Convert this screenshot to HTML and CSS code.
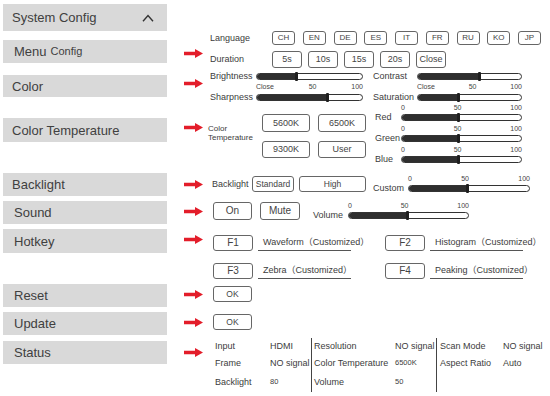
FILE: index.html
```html
<!DOCTYPE html>
<html lang="en">
<head>
  <meta charset="UTF-8" />
  <meta name="viewport" content="width=device-width, initial-scale=1.0" />
  <title>menu map</title>
  <link rel="stylesheet" href="styles.css">
</head>
<body>
  <div class="page">
    <!-- left: menu entries -->
    <div class="menu">
      <div class="menu-item item-system">
        <span>System Config</span>
        <svg class="chevron" viewBox="0 0 12 8"><polyline points="1,7.2 6,1.5 11,7.2" /></svg>
      </div>
      <div class="menu-item item-menu wide">Menu <small>Config</small></div>
      <div class="menu-item item-color">Color</div>
      <div class="menu-item item-temp">Color Temperature</div>
      <div class="menu-item item-backlight">Backlight</div>
      <div class="menu-item item-sound wide">Sound</div>
      <div class="menu-item item-hotkey wide">Hotkey</div>
      <div class="menu-item item-reset wide">Reset</div>
      <div class="menu-item item-update wide">Update</div>
      <div class="menu-item item-status wide">Status</div>
    </div>

    <!-- right: what each entry opens -->
    <div class="panel">
      <div class="row row-lang">
        <span class="arrow-slot"></span>
        <span class="label">Language</span>
        <div class="lang">
          <span class="btn">CH</span>
          <span class="btn">EN</span>
          <span class="btn">DE</span>
          <span class="btn">ES</span>
          <span class="btn">IT</span>
          <span class="btn">FR</span>
          <span class="btn">RU</span>
          <span class="btn">KO</span>
          <span class="btn">JP</span>
        </div>
      </div>

      <div class="row row-duration">
        <svg class="arrow" viewBox="0 0 19 9"><path d="M0 2.7H11V0L19 4.5L11 9V6.3H0Z" /></svg>
        <span class="label">Duration</span>
        <div class="durations">
          <span class="btn">5s</span>
          <span class="btn">10s</span>
          <span class="btn">15s</span>
          <span class="btn">20s</span>
          <span class="btn">Close</span>
        </div>
      </div>

      <div class="row row-color">
        <svg class="arrow" viewBox="0 0 19 9"><path d="M0 2.7H11V0L19 4.5L11 9V6.3H0Z" /></svg>
        <div class="adjust-grid">
          <span class="name">Brightness</span>
          <div class="slider"><div class="fill" style="width:37%"></div></div>
          <span class="name second">Contrast</span>
          <div class="slider"><div class="fill" style="width:59%"></div></div>

          <span></span>
          <div class="scale"><span>Close</span><span>50</span><span>100</span></div>
          <span></span>
          <div class="scale"><span>Close</span><span>50</span><span>100</span></div>

          <span class="name">Sharpness</span>
          <div class="slider"><div class="fill" style="width:67%"></div></div>
          <span class="name second">Saturation</span>
          <div class="slider"><div class="fill" style="width:39%"></div></div>
        </div>
      </div>

      <div class="row row-temp">
        <svg class="arrow" viewBox="0 0 19 9"><path d="M0 2.7H11V0L19 4.5L11 9V6.3H0Z" /></svg>
        <span class="temp-label">Color<br>Temperature</span>
        <div class="temp-buttons">
          <span class="btn">5600K</span>
          <span class="btn">6500K</span>
          <span class="btn">9300K</span>
          <span class="btn">User</span>
        </div>
        <div class="rgb">
          <div class="channel">
            <span></span>
            <div class="scale"><span>0</span><span>50</span><span>100</span></div>
            <span class="name">Red</span>
            <div class="slider"><div class="fill" style="width:47%"></div></div>
          </div>
          <div class="channel">
            <span></span>
            <div class="scale"><span>0</span><span>50</span><span>100</span></div>
            <span class="name">Green</span>
            <div class="slider"><div class="fill" style="width:47%"></div></div>
          </div>
          <div class="channel">
            <span></span>
            <div class="scale"><span>0</span><span>50</span><span>100</span></div>
            <span class="name">Blue</span>
            <div class="slider"><div class="fill" style="width:47%"></div></div>
          </div>
        </div>
      </div>

      <div class="row row-backlight">
        <svg class="arrow" viewBox="0 0 19 9"><path d="M0 2.7H11V0L19 4.5L11 9V6.3H0Z" /></svg>
        <span class="bl-label">Backlight</span>
        <span class="btn bl-standard">Standard</span>
        <span class="btn bl-high">High</span>
        <div class="channel custom">
          <span></span>
          <div class="scale"><span>0</span><span>50</span><span>100</span></div>
          <span class="name">Custom</span>
          <div class="slider"><div class="fill" style="width:48%"></div></div>
        </div>
      </div>

      <div class="row row-sound">
        <svg class="arrow" viewBox="0 0 19 9"><path d="M0 2.7H11V0L19 4.5L11 9V6.3H0Z" /></svg>
        <span class="btn snd-on">On</span>
        <span class="btn snd-mute">Mute</span>
        <div class="channel volume">
          <span></span>
          <div class="scale"><span>0</span><span>50</span><span>100</span></div>
          <span class="name">Volume</span>
          <div class="slider"><div class="fill" style="width:49%"></div></div>
        </div>
      </div>

      <div class="row row-hotkey">
        <svg class="arrow" viewBox="0 0 19 9"><path d="M0 2.7H11V0L19 4.5L11 9V6.3H0Z" /></svg>
        <div class="hotkey"><span class="btn key">F1</span><span class="field">Waveform（Customized）</span></div>
        <div class="hotkey"><span class="btn key">F2</span><span class="field">Histogram（Customized）</span></div>
      </div>

      <div class="row row-hotkey2">
        <span class="arrow-slot"></span>
        <div class="hotkey"><span class="btn key">F3</span><span class="field">Zebra（Customized）</span></div>
        <div class="hotkey"><span class="btn key">F4</span><span class="field">Peaking（Customized）</span></div>
      </div>

      <div class="row row-reset">
        <svg class="arrow" viewBox="0 0 19 9"><path d="M0 2.7H11V0L19 4.5L11 9V6.3H0Z" /></svg>
        <span class="btn ok">OK</span>
      </div>

      <div class="row row-update">
        <svg class="arrow" viewBox="0 0 19 9"><path d="M0 2.7H11V0L19 4.5L11 9V6.3H0Z" /></svg>
        <span class="btn ok">OK</span>
      </div>

      <div class="row row-status">
        <svg class="arrow" viewBox="0 0 19 9"><path d="M0 2.7H11V0L19 4.5L11 9V6.3H0Z" /></svg>
        <div class="status">
          <div class="status-group g1">
            <span>Input</span><span>HDMI</span>
            <span>Frame</span><span>NO signal</span>
            <span>Backlight</span><span class="small">80</span>
          </div>
          <div class="status-group g2">
            <span>Resolution</span><span>NO signal</span>
            <span>Color Temperature</span><span class="small">6500K</span>
            <span>Volume</span><span class="small">50</span>
          </div>
          <div class="status-group g3">
            <span>Scan Mode</span><span>NO signal</span>
            <span>Aspect Ratio</span><span>Auto</span>
            <span></span><span></span>
          </div>
        </div>
      </div>
    </div>
  </div>
</body>
</html>
```

FILE: styles.css
```css
* {
  box-sizing: border-box;
}

body {
  margin: 0;
  background: #fff;
  color: #3c3c3c;
  font-family: "Liberation Sans", "Noto Sans CJK SC", Arial, sans-serif;
  font-size: 9px;
  line-height: 1;
}

.page {
  display: flex;
  width: 550px;
  height: 396px;
  overflow: hidden;
}

/* left menu */
.menu {
  display: flex;
  flex-direction: column;
  width: 167px;
  flex-shrink: 0;
  padding: 4px 0 0 3px;
}

.menu-item {
  height: 23px;
  background: #d9d9d9;
  display: flex;
  align-items: center;
  padding-left: 9px;
  font-size: 13px;
  color: #404040;
  white-space: nowrap;
}

.menu-item.wide {
  padding-left: 11px;
}

.menu-item small {
  font-size: 11px;
  margin-left: 4px;
}

.item-system {
  height: 27px;
  justify-content: space-between;
  padding-right: 13px;
}

.chevron {
  width: 12px;
  height: 8px;
  fill: none;
  stroke: #333;
  stroke-width: 1.4;
}

.item-menu { margin-top: 9px; }
.item-color { margin-top: 12px; height: 22px; }
.item-temp { margin-top: 21px; height: 24px; }
.item-backlight { margin-top: 31px; }
.item-sound { margin-top: 5px; }
.item-hotkey { margin-top: 5px; height: 24px; }
.item-reset { margin-top: 31px; }
.item-update { margin-top: 5px; }
.item-status { margin-top: 6px; }

/* right panel */
.panel {
  display: flex;
  flex-direction: column;
  margin-left: 17px;
}

.row {
  display: flex;
  align-items: center;
}

.arrow,
.arrow-slot {
  width: 19px;
  height: 9px;
  flex-shrink: 0;
  margin-right: 7px;
  fill: #e31d2a;
}

.label {
  width: 62px;
  flex-shrink: 0;
  white-space: nowrap;
}

.btn {
  display: flex;
  align-items: center;
  justify-content: center;
  height: 100%;
  border: 1px solid #666;
  border-radius: 3px;
  background: #fff;
  color: #444;
  white-space: nowrap;
  flex-shrink: 0;
}

.row-lang { margin-top: 31px; height: 14px; }
.row-duration { margin-top: 6px; height: 17px; }
.row-color { margin-top: 2px; height: 33px; align-items: flex-start; }
.row-temp { margin-top: 1px; height: 60px; align-items: flex-start; }
.row-backlight { margin-top: 10px; height: 20px; }
.row-sound { margin-top: 8px; height: 18px; }
.row-hotkey { margin-top: 15px; height: 16px; }
.row-hotkey2 { margin-top: 12px; height: 16px; }
.row-reset { margin-top: 7px; height: 16px; }
.row-update { margin-top: 12px; height: 16px; }
.row-status { margin-top: 8px; height: 54px; align-items: flex-start; }

.row-duration .arrow { align-self: flex-start; margin-top: -2px; }
.row-color .arrow { margin-top: 9px; }
.row-temp .arrow { margin-top: 19px; }
.row-hotkey .arrow { align-self: flex-start; }
.row-status .arrow { margin-top: 10px; }

.lang {
  display: flex;
  gap: 7.75px;
  height: 14px;
}

.lang .btn {
  width: 23px;
  font-size: 8px;
}

.durations {
  display: flex;
  gap: 6px;
  height: 17px;
}

.durations .btn {
  width: 30px;
}

/* sliders */
.slider {
  height: 7px;
  border: 1px solid #333;
  border-radius: 4px;
  background: #fff;
  position: relative;
}

.fill {
  height: 100%;
  background: #2e2e2e;
  border-radius: 3px 0 0 3px;
  position: relative;
}

.fill:after {
  content: "";
  position: absolute;
  right: -2px;
  top: -2px;
  width: 3px;
  height: 9px;
  background: #1e1e1e;
  border-radius: 1px;
}

.scale {
  display: flex;
  justify-content: space-between;
  font-size: 7px;
  line-height: 8px;
  color: #444;
}

.name {
  white-space: nowrap;
}

.adjust-grid {
  display: grid;
  grid-template-columns: 46px 107px 54px 105px;
  grid-template-rows: 12px 10px 11px;
  align-items: center;
}

.adjust-grid .second {
  padding-left: 10px;
}

/* color temperature */
.temp-label {
  width: 54px;
  margin-left: -2px;
  margin-top: 20px;
  font-size: 8px;
  line-height: 9px;
  flex-shrink: 0;
}

.temp-buttons {
  display: grid;
  grid-template-columns: 48px 48px;
  grid-template-rows: 18px 17px;
  column-gap: 8px;
  row-gap: 9px;
  margin-top: 10px;
}

.rgb {
  display: flex;
  flex-direction: column;
  gap: 3px;
  margin-left: 9px;
}

.channel {
  display: grid;
  grid-template-columns: 26px 121px;
  grid-template-rows: 8px 10px;
  align-items: center;
}

/* backlight & sound */
.bl-label {
  width: 40px;
  margin-left: 2px;
  flex-shrink: 0;
}

.row-backlight .btn {
  height: 16px;
  font-size: 8.5px;
}

.bl-standard { width: 42px; }
.bl-high { width: 67px; margin-left: 5px; }

.channel.custom {
  margin-left: 7px;
  grid-template-columns: 35px 122px;
}

.snd-on {
  width: 39px;
  margin-left: 3px;
  font-size: 10px;
}

.snd-mute {
  width: 40px;
  margin-left: 8px;
  font-size: 10px;
}

.channel.volume {
  margin-left: 13px;
  grid-template-columns: 35px 121px;
}

/* hotkeys */
.hotkey {
  display: flex;
  width: 172px;
  height: 16px;
  flex-shrink: 0;
}

.hotkey:first-of-type {
  margin-left: 3px;
}

.key {
  width: 40px;
  font-size: 10px;
}

.field {
  width: 93px;
  margin-left: 5px;
  padding-left: 5px;
  border-bottom: 1px solid #555;
  line-height: 15px;
  white-space: nowrap;
}

.ok {
  width: 39px;
  margin-left: 3px;
  font-size: 8.5px;
}

/* status table */
.status {
  display: flex;
  height: 54px;
  margin-left: 5px;
}

.status-group {
  display: grid;
  grid-template-rows: 16px 18px 20px;
  align-items: center;
  white-space: nowrap;
}

.g1 {
  grid-template-columns: 55px 41px;
}

.g2 {
  grid-template-columns: 81px 41px;
  border-left: 1px solid #444;
  padding-left: 2px;
}

.g3 {
  grid-template-columns: 63px 45px;
  border-left: 1px solid #444;
  padding-left: 3px;
}

.small {
  font-size: 7.5px;
}
```
